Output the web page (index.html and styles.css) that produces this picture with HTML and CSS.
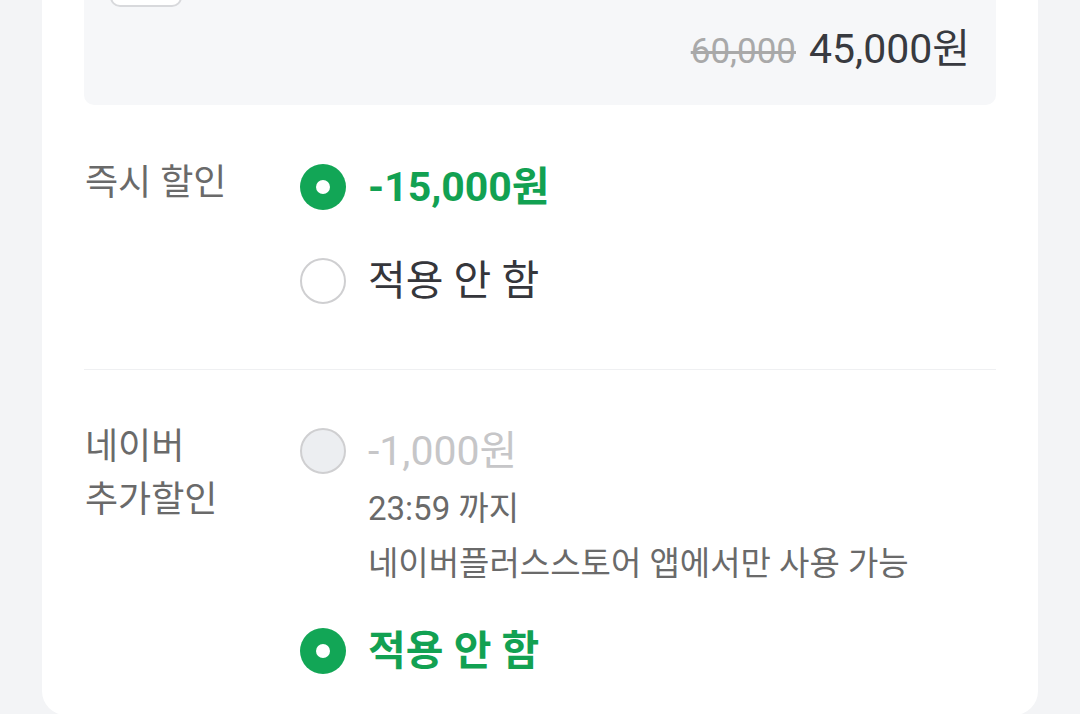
FILE: index.html
```html
<!DOCTYPE html>
<html lang="ko">
<head>
<meta charset="utf-8">
<link rel="stylesheet" href="styles.css">
</head>
<body>
<div class="card">
  <div class="summary">
    <div class="summary-btn"></div>
    <div class="price-row">
      <span class="price-old">60,000</span>
      <span class="price-new">45,000원</span>
    </div>
  </div>

  <div class="section">
    <div class="label">즉시 할인</div>
    <div class="options">
      <div class="option">
        <span class="radio radio-on"></span>
        <span class="opt-text opt-selected">-15,000원</span>
      </div>
      <div class="option">
        <span class="radio"></span>
        <span class="opt-text">적용 안 함</span>
      </div>
    </div>
  </div>

  <div class="divider"></div>

  <div class="section section-2">
    <div class="label">네이버<br>추가할인</div>
    <div class="options options-2">
      <div class="option option-top">
        <span class="radio radio-disabled"></span>
        <div class="opt-body">
          <span class="opt-text opt-disabled">-1,000원</span>
          <div class="sub-line">23:59 까지</div>
          <div class="sub-line">네이버플러스스토어 앱에서만 사용 가능</div>
        </div>
      </div>
      <div class="option">
        <span class="radio radio-on"></span>
        <span class="opt-text opt-selected">적용 안 함</span>
      </div>
    </div>
  </div>
</div>
</body>
</html>
```

FILE: styles.css
```css
html, body {
  margin: 0;
  padding: 0;
}

body {
  background: #f3f4f6;
  font-family: Roboto, "Noto Sans CJK KR", "Noto Sans", sans-serif;
  height: 714px;
  overflow: hidden;
}

.card {
  margin: -63px 42px 0;
  background: #ffffff;
  border-radius: 0 0 24px 24px;
  padding: 0 42px 40px;
}

.summary {
  background: #f6f7f9;
  border-radius: 0 0 10px 10px;
  padding: 24px 26px 29px 26px;
}

.summary-btn {
  width: 68px;
  height: 42px;
  border: 2px solid #d8d9dc;
  border-radius: 10px;
  background: #ffffff;
}

.price-row {
  margin-top: 18px;
  display: flex;
  justify-content: flex-end;
  align-items: baseline;
  gap: 13px;
  line-height: 48px;
}

.price-old {
  font-size: 35px;
  color: #a9a9a9;
  text-decoration: line-through;
  text-decoration-thickness: 3px;
}

.price-new {
  font-size: 41px;
  color: #383a40;
}

.section {
  display: grid;
  grid-template-columns: 216px 1fr;
  padding: 58px 0 64px;
}

.section-2 {
  padding: 57px 0 0;
}

.label {
  font-size: 36px;
  line-height: 53px;
  color: #6a6a6a;
  margin-top: -6px;
  padding-left: 1px;
}

.options {
  display: flex;
  flex-direction: column;
  gap: 46px;
}

.options-2 {
  gap: 36px;
}

.option {
  display: flex;
  align-items: center;
  gap: 22px;
  height: 48px;
}

.option-top {
  align-items: flex-start;
  height: auto;
}

.option-top .radio {
  margin-top: 1px;
}

.opt-body {
  display: flex;
  flex-direction: column;
}

.radio {
  flex: none;
  width: 46px;
  height: 46px;
  box-sizing: border-box;
  border-radius: 50%;
  border: 2px solid #cfcfd1;
  background: #ffffff;
  position: relative;
}

.radio-on {
  border: none;
  background: #12a656;
}

.radio-on::after {
  content: "";
  position: absolute;
  left: 16px;
  top: 16px;
  width: 14px;
  height: 14px;
  border-radius: 50%;
  background: #ffffff;
}

.radio-disabled {
  background: #eceef1;
  border-color: #cfcfd1;
}

.opt-text {
  font-size: 41px;
  line-height: 48px;
  color: #35363b;
}

.opt-selected {
  color: #12a152;
  font-weight: 700;
}

.opt-disabled {
  color: #c6c6c8;
}

.sub-line {
  font-size: 33px;
  line-height: 55px;
  color: #6a6a6a;
}

.sub-line:first-of-type {
  margin-top: 6px;
}

.divider {
  height: 1px;
  background: #eff0f2;
}
```
